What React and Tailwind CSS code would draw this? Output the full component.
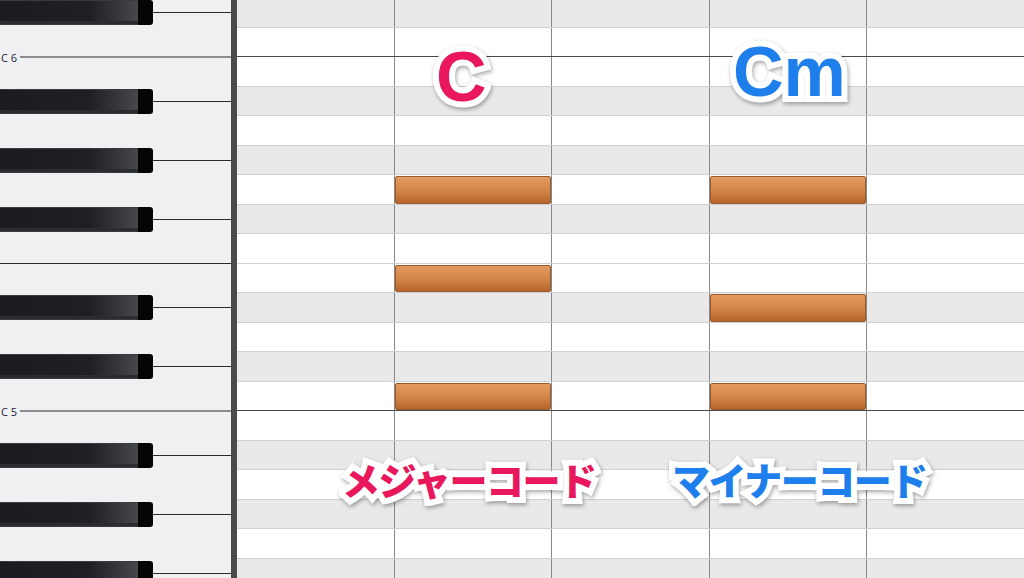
import React from "react";

const rows = [
  { b: true },
  { c: "C 6" },
  {},
  { b: true },
  {},
  { b: true },
  {},
  { b: true },
  { ef: true },
  {},
  { b: true },
  {},
  { b: true },
  { c: "C 5" },
  {},
  { b: true },
  {},
  { b: true },
  {},
  { b: true },
];

const notes = { 6: [1, 3], 9: [1], 10: [3], 13: [1, 3] };

function BlackKey() {
  return (
    <div className="flex h-[25px] w-[153px] shrink-0">
      <div className="h-full w-[138px] border-y border-[#3a3b3e] bg-[linear-gradient(to_right,#1b1c1f_0%,#1f2023_65%,#35373b_85%,#46484c_100%)] shadow-[inset_0_-3px_0_#2b2c30]" />
      <div className="h-full w-[15px] rounded-r-[3px] bg-[#050505]" />
    </div>
  );
}

function PianoRow({ r }) {
  return (
    <div
      className={`relative flex h-[29.5px] items-center ${
        r.ef ? "border-b border-[#2a2a2a]" : ""
      }`}
    >
      {r.b && (
        <>
          <BlackKey />
          <div className="h-px flex-1 bg-[#2a2a2a]" />
        </>
      )}
      {r.c && (
        <div className="absolute bottom-0 left-0 right-0 flex translate-y-1/2 items-center gap-[3px]">
          <span className="pl-[1px] text-[11px] leading-none text-[#1a2340] [font-family:'Open_Sans','Liberation_Sans',sans-serif]">
            {r.c}
          </span>
          <div className="h-px flex-1 bg-[#2a2a2a]" />
        </div>
      )}
    </div>
  );
}

function GridRow({ r, i }) {
  const n = notes[i] || [];
  return (
    <div
      className={`grid h-[29.5px] grid-cols-[157.5px_157.5px_157.5px_157.5px_1fr] border-b ${
        r.c ? "border-[#4a4a4a]" : "border-[#d0d0d0]"
      } ${r.b ? "bg-[#e9e9e9]" : "bg-white"}`}
    >
      {[0, 1, 2, 3, 4].map((col) => (
        <div
          key={col}
          className={`pt-px ${col < 4 ? "border-r border-[#888888]" : ""}`}
        >
          {n.includes(col) && (
            <div className="h-full rounded-[2px] border border-[#9a5a2a] bg-[linear-gradient(to_bottom,#e39b5f_0%,#d4864a_50%,#b6652c_100%)]" />
          )}
        </div>
      ))}
    </div>
  );
}

function Outlined({ children, color, className }) {
  return (
    <div className={`absolute whitespace-nowrap ${className}`}>
      <span className="block text-white [-webkit-text-stroke:12px_white] drop-shadow-[1px_2px_2px_rgba(0,0,0,0.35)]">
        {children}
      </span>
      <span className={`absolute inset-0 block ${color}`}>{children}</span>
    </div>
  );
}

export default function App() {
  return (
    <div className="flex h-[578px] w-[1024px] overflow-hidden bg-white">
      <div className="w-[231px] shrink-0 bg-[#eff0f2]">
        <div className="-mt-[2px]">
          {rows.map((r, i) => (
            <PianoRow key={i} r={r} />
          ))}
        </div>
      </div>
      <div className="w-[6px] shrink-0 bg-[#4b4b4b]" />
      <div className="relative flex-1">
        <div className="-mt-[2px]">
          {rows.map((r, i) => (
            <GridRow key={i} r={r} i={i} />
          ))}
        </div>

        <Outlined
          color="text-[#e9175c]"
          className="left-[199px] top-[42px] text-[70px] font-bold leading-none [font-family:'Liberation_Sans',Arial,sans-serif]"
        >
          C
        </Outlined>
        <Outlined
          color="text-[#1e7fec]"
          className="left-[496px] top-[37px] text-[70px] font-bold leading-none [font-family:'Liberation_Sans',Arial,sans-serif]"
        >
          Cm
        </Outlined>

        <Outlined
          color="text-[#e9175c]"
          className="left-[105px] top-[460px] text-[38px] font-black leading-none tracking-[-0.04em] [font-family:'Noto_Sans_CJK_JP',sans-serif]"
        >
          メジャーコード
        </Outlined>
        <Outlined
          color="text-[#1e7fec]"
          className="left-[435px] top-[460px] text-[38px] font-black leading-none tracking-[-0.04em] [font-family:'Noto_Sans_CJK_JP',sans-serif]"
        >
          マイナーコード
        </Outlined>
      </div>
    </div>
  );
}
